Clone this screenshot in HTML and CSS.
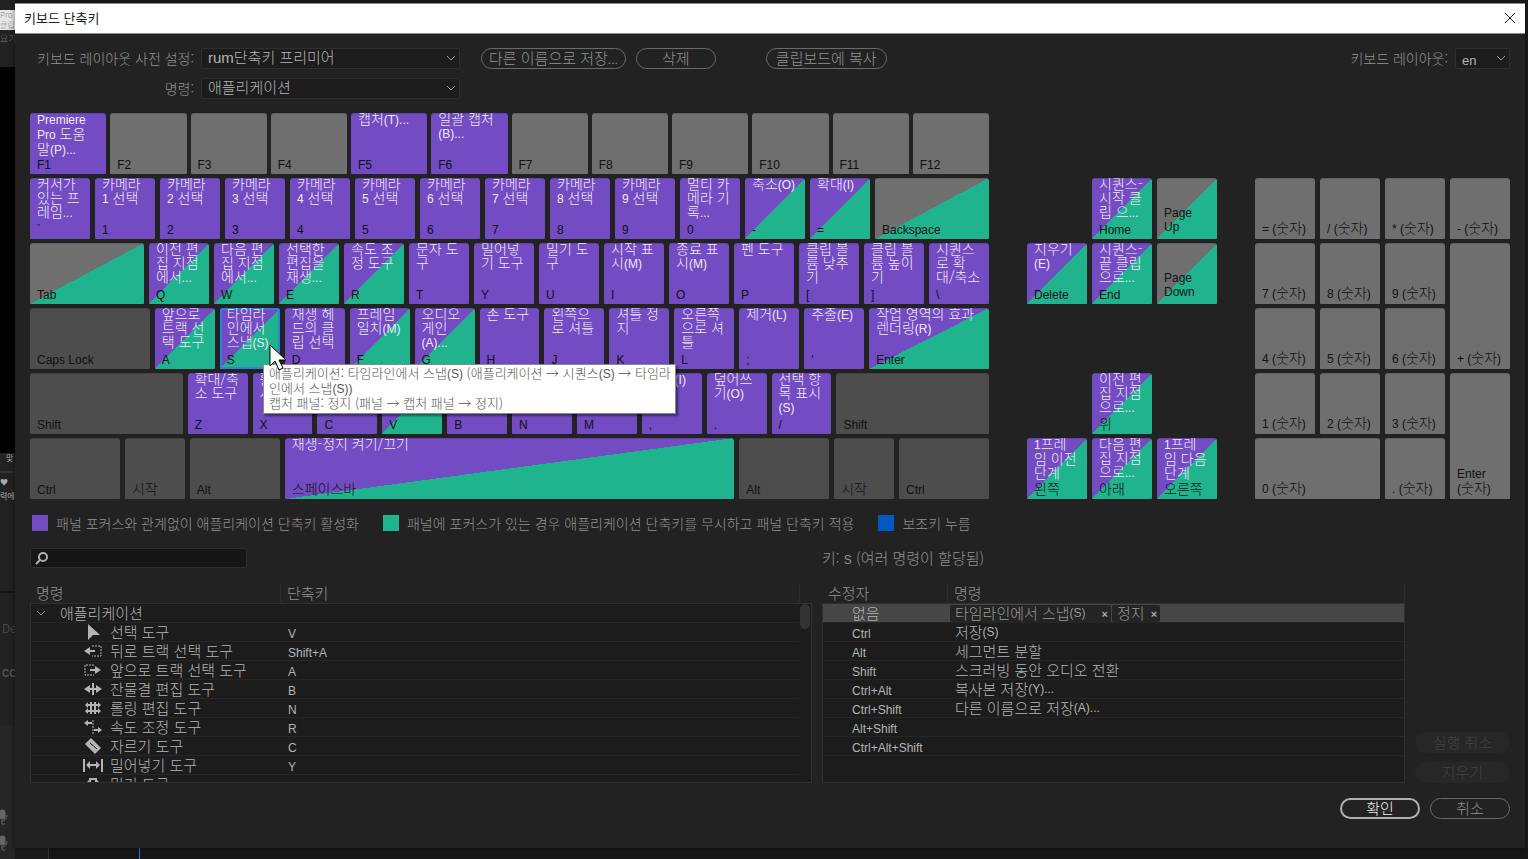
FILE: index.html
```html
<!DOCTYPE html>
<html lang="ko">
<head>
<meta charset="utf-8">
<title>키보드 단축키</title>
<link rel="stylesheet" href="styles.css">
</head>
<body>
<div class="backdrop" aria-hidden="true">
  <div class="strip">
    <div class="menu"><span>Pro 2(</span><span>클립(C)</span></div>
    <div class="tab">요기</div>
    <div class="monitor"></div>
    <div class="tools"><b>맞</b><i></i><b>♥</b><b>력에</b></div>
    <div class="bin">De</div>
    <div class="caption">CC</div>
    <div class="mics">
      <svg viewBox="0 0 10 16"><rect x="0" y="1" width="5" height="9" rx="2"/><path d="M7 6q0 6-6 6M2 12v3h3"/></svg>
      <svg viewBox="0 0 10 16"><rect x="0" y="1" width="5" height="9" rx="2"/><path d="M7 6q0 6-6 6M2 12v3h3"/></svg>
    </div>
  </div>
  <div class="timeline"></div>
</div>

<main class="dialog" role="dialog" aria-labelledby="title">
  <header class="titlebar">
    <h1 id="title">키보드 단축키</h1>
    <button class="close" aria-label="닫기"><svg viewBox="0 0 12 12"><path d="M1 1l10 10M11 1L1 11"/></svg></button>
  </header>
  <div class="content">
    <section class="toolbar">
      <label class="preset-label" for="preset">키보드 레이아웃 사전 설정:</label>
      <div class="select"><select id="preset"><option>rum단축키 프리미어</option></select><svg viewBox="0 0 10 6"><path d="M1 1l4 4 4-4"/></svg></div>
      <div class="actions">
        <button class="pill save">다른 이름으로 저장<small>...</small></button>
        <button class="pill">삭제</button>
        <button class="pill copy">클립보드에 복사</button>
      </div>
      <label class="layout-label" for="layout">키보드 레이아웃:</label>
      <div class="select latin"><select id="layout"><option>en</option></select><svg viewBox="0 0 10 6"><path d="M1 1l4 4 4-4"/></svg></div>
      <label class="preset-label" for="command">명령:</label>
      <div class="select"><select id="command"><option>애플리케이션</option></select><svg viewBox="0 0 10 6"><path d="M1 1l4 4 4-4"/></svg></div>
    </section>

    <section class="keyboard">
      <div class="board">
        <div class="row frow">
          <button class="key app"><span class="cmd"><small>Premiere</small><br><small>Pro</small> 도움<br>말<small>(P)...</small></span><span class="cap">F1</span></button>
          <button class="key"><span class="cap">F2</span></button>
          <button class="key"><span class="cap">F3</span></button>
          <button class="key"><span class="cap">F4</span></button>
          <button class="key app"><span class="cmd">캡처<small>(T)...</small></span><span class="cap">F5</span></button>
          <button class="key app"><span class="cmd">일괄 캡처<br><small>(B)...</small></span><span class="cap">F6</span></button>
          <button class="key"><span class="cap">F7</span></button>
          <button class="key"><span class="cap">F8</span></button>
          <button class="key"><span class="cap">F9</span></button>
          <button class="key"><span class="cap">F10</span></button>
          <button class="key"><span class="cap">F11</span></button>
          <button class="key"><span class="cap">F12</span></button>
        </div>
        <div class="row">
          <button class="key app"><span class="cmd">커서가<br>있는 프<br>레임<small>...</small></span><span class="cap">`</span></button>
          <button class="key app"><span class="cmd">카메라<br><small>1</small> 선택</span><span class="cap">1</span></button>
          <button class="key app"><span class="cmd">카메라<br><small>2</small> 선택</span><span class="cap">2</span></button>
          <button class="key app"><span class="cmd">카메라<br><small>3</small> 선택</span><span class="cap">3</span></button>
          <button class="key app"><span class="cmd">카메라<br><small>4</small> 선택</span><span class="cap">4</span></button>
          <button class="key app"><span class="cmd">카메라<br><small>5</small> 선택</span><span class="cap">5</span></button>
          <button class="key app"><span class="cmd">카메라<br><small>6</small> 선택</span><span class="cap">6</span></button>
          <button class="key app"><span class="cmd">카메라<br><small>7</small> 선택</span><span class="cap">7</span></button>
          <button class="key app"><span class="cmd">카메라<br><small>8</small> 선택</span><span class="cap">8</span></button>
          <button class="key app"><span class="cmd">카메라<br><small>9</small> 선택</span><span class="cap">9</span></button>
          <button class="key app"><span class="cmd">멀티 카<br>메라 기<br>록<small>...</small></span><span class="cap">0</span></button>
          <button class="key app both"><span class="cmd">축소<small>(O)</small></span><span class="cap">-</span></button>
          <button class="key app both"><span class="cmd">확대<small>(I)</small></span><span class="cap">=</span></button>
          <button class="key both w114"><span class="cap">Backspace</span></button>
        </div>
        <div class="row">
          <button class="key both w114"><span class="cap">Tab</span></button>
          <button class="key app both"><span class="cmd">이전 편<br>집 지점<br>에서<small>...</small></span><span class="cap">Q</span></button>
          <button class="key app both"><span class="cmd">다음 편<br>집 지점<br>에서<small>...</small></span><span class="cap">W</span></button>
          <button class="key app both"><span class="cmd">선택한<br>편집을<br>재생<small>...</small></span><span class="cap">E</span></button>
          <button class="key app both"><span class="cmd">속도 조<br>정 도구</span><span class="cap">R</span></button>
          <button class="key app"><span class="cmd">문자 도<br>구</span><span class="cap">T</span></button>
          <button class="key app"><span class="cmd">밀어넣<br>기 도구</span><span class="cap">Y</span></button>
          <button class="key app"><span class="cmd">밀기 도<br>구</span><span class="cap">U</span></button>
          <button class="key app"><span class="cmd">시작 표<br>시<small>(M)</small></span><span class="cap">I</span></button>
          <button class="key app"><span class="cmd">종료 표<br>시<small>(M)</small></span><span class="cap">O</span></button>
          <button class="key app"><span class="cmd">펜 도구</span><span class="cap">P</span></button>
          <button class="key app"><span class="cmd">클립 볼<br>륨 낮추<br>기</span><span class="cap">[</span></button>
          <button class="key app"><span class="cmd">클립 볼<br>륨 높이<br>기</span><span class="cap">]</span></button>
          <button class="key app"><span class="cmd">시퀀스<br>로 확<br>대/축소</span><span class="cap">\</span></button>
        </div>
        <div class="row">
          <button class="key mod w120"><span class="cap">Caps Lock</span></button>
          <button class="key app both"><span class="cmd">앞으로<br>트랙 선<br>택 도구</span><span class="cap">A</span></button>
          <button class="key app both selected"><span class="cmd">타임라<br>인에서<br>스냅<small>(S)</small></span><span class="cap">S</span></button>
          <button class="key app"><span class="cmd">재생 헤<br>드의 클<br>립 선택</span><span class="cap">D</span></button>
          <button class="key app both"><span class="cmd">프레임<br>일치<small>(M)</small></span><span class="cap">F</span></button>
          <button class="key app both"><span class="cmd">오디오<br>게인<br><small>(A)...</small></span><span class="cap">G</span></button>
          <button class="key app"><span class="cmd">손 도구</span><span class="cap">H</span></button>
          <button class="key app"><span class="cmd">왼쪽으<br>로 셔틀</span><span class="cap">J</span></button>
          <button class="key app"><span class="cmd">셔틀 정<br>지</span><span class="cap">K</span></button>
          <button class="key app"><span class="cmd">오른쪽<br>으로 셔<br>틀</span><span class="cap">L</span></button>
          <button class="key app"><span class="cmd">제거<small>(L)</small></span><span class="cap">;</span></button>
          <button class="key app"><span class="cmd">추출<small>(E)</small></span><span class="cap">'</span></button>
          <button class="key app both w120"><span class="cmd">작업 영역의 효과<br>렌더링<small>(R)</small></span><span class="cap">Enter</span></button>
        </div>
        <div class="row">
          <button class="key mod w153"><span class="cap">Shift</span></button>
          <button class="key app"><span class="cmd">확대/축<br>소 도구</span><span class="cap">Z</span></button>
          <button class="key app"><span class="cmd">활<br>시</span><span class="cap">X</span></button>
          <button class="key app"><span class="cap">C</span></button>
          <button class="key app both"><span class="cap">V</span></button>
          <button class="key app"><span class="cap">B</span></button>
          <button class="key app"><span class="cap">N</span></button>
          <button class="key app"><span class="cap">M</span></button>
          <button class="key app"><span class="cmd">삽입<small>(I)</small></span><span class="cap">,</span></button>
          <button class="key app"><span class="cmd">덮어쓰<br>기<small>(O)</small></span><span class="cap">.</span></button>
          <button class="key app"><span class="cmd">선택 항<br>목 표시<br><small>(S)</small></span><span class="cap">/</span></button>
          <button class="key mod w153"><span class="cap">Shift</span></button>
        </div>
        <div class="row">
          <button class="key mod w90"><span class="cap">Ctrl</span></button>
          <button class="key mod"><span class="cap ko">시작</span></button>
          <button class="key mod w90"><span class="cap">Alt</span></button>
          <button class="key app both w450"><span class="cmd">재생-정지 켜기/끄기</span><span class="cap ko">스페이스바</span></button>
          <button class="key mod w90"><span class="cap">Alt</span></button>
          <button class="key mod"><span class="cap ko">시작</span></button>
          <button class="key mod w90"><span class="cap">Ctrl</span></button>
        </div>
        <div class="tooltip" role="tooltip">애플리케이션: 타임라인에서 스냅<small>(S)</small> (애플리케이션 → 시퀀스<small>(S)</small> → 타임라<br>인에서 스냅<small>(S))</small><br>캡처 패널: 정지 (패널 → 캡처 패널 → 정지)</div>
        <svg class="cursor" viewBox="0 0 18 28"><path d="M1 1v21l5-5 4 9 4-2-4-8h7z"/></svg>
      </div>

      <div class="nav">
        <button class="key app both home"><span class="cmd">시퀀스-<br>시작 클<br>립 으<small>...</small></span><span class="cap">Home</span></button>
        <button class="key both pgup"><span class="cap">Page<br>Up</span></button>
        <button class="key app both del"><span class="cmd">지우기<br><small>(E)</small></span><span class="cap">Delete</span></button>
        <button class="key app both end"><span class="cmd">시퀀스-<br>끝 클립<br>으로<small>...</small></span><span class="cap">End</span></button>
        <button class="key both pgdn"><span class="cap">Page<br>Down</span></button>
        <button class="key app both up"><span class="cmd">이전 편<br>집 지점<br>으로<small>...</small></span><span class="cap ko">위</span></button>
        <button class="key app both left"><span class="cmd"><small>1</small>프레<br>임 이전<br>단계</span><span class="cap ko">왼쪽</span></button>
        <button class="key app both down"><span class="cmd">다음 편<br>집 지점<br>으로<small>...</small></span><span class="cap ko">아래</span></button>
        <button class="key app both right"><span class="cmd"><small>1</small>프레<br>임 다음<br>단계</span><span class="cap ko">오른쪽</span></button>
      </div>

      <div class="numpad">
        <span class="spacer"></span>
        <button class="key"><span class="cap ko"><small>= (</small>숫자<small>)</small></span></button>
        <button class="key"><span class="cap ko"><small>/ (</small>숫자<small>)</small></span></button>
        <button class="key"><span class="cap ko"><small>* (</small>숫자<small>)</small></span></button>
        <button class="key"><span class="cap ko"><small>- (</small>숫자<small>)</small></span></button>
        <button class="key"><span class="cap ko"><small>7 (</small>숫자<small>)</small></span></button>
        <button class="key"><span class="cap ko"><small>8 (</small>숫자<small>)</small></span></button>
        <button class="key"><span class="cap ko"><small>9 (</small>숫자<small>)</small></span></button>
        <button class="key tall"><span class="cap ko"><small>+ (</small>숫자<small>)</small></span></button>
        <button class="key"><span class="cap ko"><small>4 (</small>숫자<small>)</small></span></button>
        <button class="key"><span class="cap ko"><small>5 (</small>숫자<small>)</small></span></button>
        <button class="key"><span class="cap ko"><small>6 (</small>숫자<small>)</small></span></button>
        <button class="key"><span class="cap ko"><small>1 (</small>숫자<small>)</small></span></button>
        <button class="key"><span class="cap ko"><small>2 (</small>숫자<small>)</small></span></button>
        <button class="key"><span class="cap ko"><small>3 (</small>숫자<small>)</small></span></button>
        <button class="key tall"><span class="cap ko"><small>Enter</small><br><small>(</small>숫자<small>)</small></span></button>
        <button class="key wide"><span class="cap ko"><small>0 (</small>숫자<small>)</small></span></button>
        <button class="key"><span class="cap ko"><small>. (</small>숫자<small>)</small></span></button>
      </div>
    </section>

    <ul class="legend">
      <li><i class="swatch purple"></i>패널 포커스와 관계없이 애플리케이션 단축키 활성화</li>
      <li><i class="swatch teal"></i>패널에 포커스가 있는 경우 애플리케이션 단축키를 무시하고 패널 단축키 적용</li>
      <li><i class="swatch blue"></i>보조키 누름</li>
    </ul>

    <section class="lists">
      <div class="panel">
        <div class="search">
          <input type="search" aria-label="검색">
          <svg viewBox="0 0 14 14"><circle cx="8" cy="5" r="4"/><path d="M5 8l-4 4"/></svg>
        </div>
        <table class="commands">
          <thead><tr><th>명령</th><th>단축키</th></tr></thead>
          <tbody>
            <tr class="group"><td><svg class="chev" viewBox="0 0 10 6"><path d="M1 1l4 4 4-4"/></svg>애플리케이션</td><td></td></tr>
            <tr><td><svg class="icon" viewBox="0 0 20 16"><path class="f" d="M5 0v16l5-5h7z"/></svg>선택 도구</td><td>V</td></tr>
            <tr><td><svg class="icon" viewBox="0 0 20 16"><path class="f" d="M1 8l6-4v3h5v2H7v3z"/><path class="d" d="M9 3h9v10H9"/></svg>뒤로 트랙 선택 도구</td><td>Shift+A</td></tr>
            <tr><td><svg class="icon" viewBox="0 0 20 16"><path class="f" d="M18 8l-6-4v3H7v2h5v3z"/><path class="d" d="M11 3H2v10h9"/></svg>앞으로 트랙 선택 도구</td><td>A</td></tr>
            <tr><td><svg class="icon" viewBox="0 0 20 16"><path class="f" d="M1 8l6-4v3h2V2h2v5h2V4l6 4-6 4V9h-2v5H9V9H7v3z"/></svg>잔물결 편집 도구</td><td>B</td></tr>
            <tr><td><svg class="icon" viewBox="0 0 20 16"><path d="M8 2v12M12 2v12M4 5h12M4 11h12"/><path class="f" d="M2 5l3-3v6zM2 11l3-3v6zM18 5l-3-3v6zM18 11l-3-3v6z"/></svg>롤링 편집 도구</td><td>N</td></tr>
            <tr><td><svg class="icon" viewBox="0 0 20 16"><path class="f" d="M1 4l4-3v2h4v2H5v2zM19 11l-4-3v2h-4v2h4v2z"/><path class="d" d="M10 1v14"/></svg>속도 조정 도구</td><td>R</td></tr>
            <tr><td><svg class="icon" viewBox="0 0 20 16"><path class="f" d="M2 6l6-6 10 10-6 6z"/><path class="slot" d="M7 5l7 6M8 7l1-1M11 9l1-1"/></svg>자르기 도구</td><td>C</td></tr>
            <tr><td><svg class="icon" viewBox="0 0 20 16"><path d="M1 2v13M19 2v13M4 8h12"/><path class="f" d="M3 8l4-4v8zM17 8l-4-4v8z"/></svg>밀어넣기 도구</td><td>Y</td></tr>
            <tr><td><svg class="icon" viewBox="0 0 20 16"><path d="M7 3h6v10H7z"/><path class="f" d="M2 8l4-4v8zM18 8l-4-4v8z"/></svg>밀기 도구</td><td></td></tr>
          </tbody>
        </table>
        <i class="thumb"></i>
      </div>
      <div class="panel">
        <p class="keyname">키: <small>S</small> (여러 명령이 할당됨)</p>
        <table class="modifiers">
          <thead><tr><th>수정자</th><th>명령</th></tr></thead>
          <tbody>
            <tr class="current"><td class="ko">없음</td><td><span class="tag">타임라인에서 스냅<small>(S)</small><button aria-label="제거">×</button></span><span class="tag near">정지<button aria-label="제거">×</button></span></td></tr>
            <tr><td>Ctrl</td><td>저장<small>(S)</small></td></tr>
            <tr><td>Alt</td><td>세그먼트 분할</td></tr>
            <tr><td>Shift</td><td>스크러빙 동안 오디오 전환</td></tr>
            <tr><td>Ctrl+Alt</td><td>복사본 저장<small>(Y)...</small></td></tr>
            <tr><td>Ctrl+Shift</td><td>다른 이름으로 저장<small>(A)...</small></td></tr>
            <tr><td>Alt+Shift</td><td></td></tr>
            <tr><td>Ctrl+Alt+Shift</td><td></td></tr>
          </tbody>
        </table>
      </div>
      <div class="side">
        <button class="pill" disabled>실행 취소</button>
        <button class="pill" disabled>지우기</button>
      </div>
    </section>

    <footer class="footer">
      <button class="pill primary">확인</button>
      <button class="pill">취소</button>
    </footer>
  </div>
</main>
</body>
</html>
```

FILE: styles.css
```css
* { box-sizing: border-box; }

body {
  position: relative;
  margin: 0;
  padding: 3px 3px 11px 15px;
  min-height: 100vh;
  display: flex;
  overflow: hidden;
  background: #191919;
  color: #929292;
  font: 300 15px/20px "Noto Sans CJK KR", "Liberation Sans", sans-serif;
}

button, select, input { font: inherit; color: inherit; margin: 0; }
button { cursor: pointer; white-space: nowrap; }
small { font: 12px/1 "Liberation Sans", sans-serif; }
svg { fill: none; stroke: currentColor; }

/* application window behind the dialog */
.backdrop { position: absolute; inset: 0; overflow: hidden; background: #1b1b1b; }
.strip {
  width: 15px;
  height: 100%;
  overflow: hidden;
  display: flex;
  flex-direction: column;
  white-space: nowrap;
  background: #222;
  font-size: 9px;
  line-height: 10px;
}
.strip .menu { margin-top: 10px; height: 20px; background: #e8e8e8; color: #888; display: grid; font-size: 8px; }
.strip .tab { height: 37px; padding-top: 4px; color: #777; }
.strip .monitor { height: 386px; background: #000; }
.strip .tools { height: 138px; display: flex; flex-direction: column; gap: 4px; color: #aaa; }
.strip .tools b { font-size: 8px; padding-left: 6px; }
.strip .tools b:nth-of-type(n+2) { padding-left: 0; }
.strip .tools i { height: 6px; border-bottom: 2px solid #333; }
.strip .bin { height: 42px; padding: 30px 0 0 2px; color: #555; font-size: 12px; border-top: 2px solid #141414; }
.strip .caption { height: 20px; margin-top: 35px; padding-left: 2px; font: bold 10px/12px "Liberation Sans", sans-serif; color: #555; }
.strip .mics { margin-top: auto; height: 134px; padding-top: 84px; background: #262626; color: #666; }
.strip .mics svg { display: block; width: 10px; height: 16px; margin-bottom: 10px; }
.strip .mics rect { fill: currentColor; }
.timeline { position: absolute; left: 48px; right: 0; bottom: 0; height: 11px; border-left: 1px solid #333; background: #171717; }
.timeline::after { content: ""; position: absolute; left: 90px; top: 0; bottom: 0; border-left: 1px solid #2d7dd8; }

.dialog {
  position: relative;
  flex: 1;
  min-width: 0;
  background: #222;
  box-shadow: 0 0 6px rgba(0, 0, 0, .5);
}
.titlebar {
  display: flex;
  align-items: center;
  justify-content: space-between;
  height: 31px;
  padding: 0 9px;
  background: #fff;
  border: solid #8a8a8a;
  border-width: 1px 0;
  color: #222;
}
.titlebar h1 { margin: 0; font-size: 13px; font-weight: 400; line-height: 20px; padding-bottom: 2px; }
.close { padding: 0 0 2px; border: 0; background: none; display: flex; }
.close svg { width: 12px; height: 12px; }
.content { padding: 14px 15px 29px; }

/* presets */
.toolbar {
  display: grid;
  grid-template-columns: 165px 259px 1fr auto 55px;
  column-gap: 6px;
  row-gap: 9px;
  align-items: center;
}
.toolbar label { text-align: right; white-space: nowrap; font-size: 14px; line-height: 18px; padding: 0 1px 2px 0; }
.select { position: relative; display: flex; color: #b4b4b4; }
.select select {
  appearance: none;
  width: 100%;
  height: 21px;
  padding: 0 24px 2px 6px;
  background: #1c1c1c;
  border: 1px solid #2e2e2e;
  border-radius: 2px;
  font-family: "Liberation Sans", "Noto Sans CJK KR", sans-serif;
  font-size: 15px;
  line-height: 17px;
}
.latin select { font-size: 13px; font-weight: 400; padding-top: 4px; padding-bottom: 0; line-height: 15px; }
.select svg { position: absolute; right: 4px; top: 7px; width: 10px; height: 6px; pointer-events: none; color: #999; }
.actions { display: flex; gap: 10px; padding-left: 15px; }
.pill {
  min-width: 80px;
  height: 21px;
  padding: 0 9px 2px;
  border: 1px solid #6a6a6a;
  border-radius: 11px;
  background: transparent;
  line-height: 17px;
}
.save { padding: 0 7px 2px; }
.copy { margin-left: 40px; }

/* keyboard */
.keyboard { display: grid; grid-template-columns: 959fr 190fr 255fr; column-gap: 38px; margin-top: 14px; }
.board { position: relative; display: grid; row-gap: 4px; grid-auto-rows: 61px; }
.row { display: flex; gap: 5px; min-width: 0; }
.frow { gap: 4px; }
.key {
  flex: 60 0 0;
  min-width: 0;
  overflow: hidden;
  display: flex;
  flex-direction: column;
  align-items: flex-start;
  padding: 0 0 2px;
  border: 0;
  border-radius: 3px 3px 1px 1px;
  text-align: left;
  color: #111;
  background: var(--face);
  box-shadow: inset 0 1px rgba(0, 0, 0, .12);
  --face: #6f6f6f;
  font-size: 14px;
  line-height: 14px;
}
.app { --face: #734bc2; }
.mod { --face: #4d4d4d; }
.both { background: linear-gradient(to bottom right, var(--face) 50%, #1fb48d 50%); }
.selected { box-shadow: inset 0 0 0 2px #2d80e4; }
.w90 { flex-grow: 90; }
.w114 { flex-grow: 114; }
.w120 { flex-grow: 120; }
.w153 { flex-grow: 153; }
.w450 { flex-grow: 450; }
.cmd { display: block; margin-top: -2px; padding-left: 7px; color: #f0eaff; }
.cap { display: block; margin-top: auto; padding-left: 7px; font: 400 12px/14px "Liberation Sans", sans-serif; }
.cap.ko { font: 300 14px/14px "Noto Sans CJK KR", sans-serif; padding-bottom: 2px; }

.nav, .numpad { display: grid; grid-auto-rows: 61px; gap: 4px 5px; }
.nav { grid-template-columns: repeat(3, 1fr); }
.home { grid-area: 2 / 2; }
.pgup { grid-area: 2 / 3; }
.pgup .cap, .pgdn .cap { padding-bottom: 3px; }
.del { grid-area: 3 / 1; }
.end { grid-area: 3 / 2; }
.pgdn { grid-area: 3 / 3; }
.up { grid-area: 5 / 2; }
.left { grid-area: 6 / 1; }
.down { grid-area: 6 / 2; }
.right { grid-area: 6 / 3; }
.numpad { grid-template-columns: repeat(4, 1fr); }
.spacer { grid-column: span 4; }
.tall { grid-row: span 2; }
.wide { grid-column: span 2; }

.tooltip {
  position: absolute;
  left: 233px;
  top: 251px;
  padding: 0 4px 3px 5px;
  background: #fff;
  border: 1px solid #888;
  box-shadow: 2px 2px 2px rgba(0, 0, 0, .45);
  color: #555;
  font-size: 13px;
  line-height: 15px;
  white-space: nowrap;
}
.cursor { position: absolute; left: 239px; top: 231px; width: 18px; height: 28px; fill: #fff; stroke: #000; }

/* legend */
.legend { display: flex; flex-wrap: wrap; gap: 24px; list-style: none; margin: 12px 0 0; padding: 0 2px; }
.legend li { display: flex; align-items: center; gap: 8px; line-height: 24px; font-size: 14px; white-space: nowrap; }
.swatch { width: 16px; height: 16px; }
.purple { background: #734bc2; }
.teal { background: #1fb48d; }
.blue { background: #0059c0; }

/* lists */
.lists { display: grid; grid-template-columns: 782fr 583fr 95px; column-gap: 10px; margin-top: 13px; }
.panel { position: relative; min-width: 0; }
.search { position: relative; width: 217px; height: 20px; margin-bottom: 15px; }
.search input { width: 100%; height: 20px; padding: 0 6px 0 22px; background: #161616; border: 1px solid #2e2e2e; border-radius: 2px; }
.search svg { position: absolute; left: 5px; top: 4px; width: 14px; height: 14px; color: #b0b0b0; stroke-width: 2; }
.keyname { margin: 0 0 15px; line-height: 20px; }

table, thead { display: block; }
tr { display: grid; }
.commands tr { grid-template-columns: 251px 1fr; margin-right: 12px; }
.modifiers tr { grid-template-columns: 126px 1fr; }
th { padding: 0 6px; font-weight: 300; line-height: 20px; text-align: left; border-right: 1px solid #2c2c2c; }
tbody { display: block; height: 180px; overflow: hidden; background: #1c1c1c; border: 1px solid #303030; color: #b4b4b4; }
tbody tr { height: 19px; border-bottom: 1px solid #262626; }
td { padding: 0 6px; display: flex; align-items: center; height: 18px; white-space: nowrap; line-height: 18px; }
.commands td:last-child, .modifiers td:first-child { font: 400 12px/18px "Liberation Sans", sans-serif; padding-top: 4px; }
.commands td:first-child { padding-left: 52px; gap: 7px; }
.commands .group td:first-child { padding-left: 5px; gap: 14px; }
.modifiers td:first-child { padding-left: 29px; }
.modifiers td.ko { font: 300 15px/18px "Noto Sans CJK KR", sans-serif; padding-top: 0; }
.chev { width: 10px; height: 6px; color: #888; }
.icon { width: 20px; height: 16px; stroke-width: 2; }
.icon .f { fill: currentColor; stroke: none; }
.icon .d { stroke-width: 1; stroke-dasharray: 2 1; }
.icon .slot { stroke: #1c1c1c; stroke-width: 1; }
.thumb { position: absolute; right: 2px; top: 56px; width: 10px; height: 25px; border-radius: 5px; background: #333; }
.current { background: #464646; }
.current td:last-child { padding-left: 1px; gap: 1px; }
.tag { display: flex; align-items: center; height: 17px; padding: 0 3px 0 5px; background: #242424; border-radius: 2px; color: #999; }
.tag button { margin-left: 16px; padding: 2px 0 0; border: 0; background: none; font: bold 11px/14px "Liberation Sans", sans-serif; color: #aaa; }
.tag.near button { margin-left: 6px; }

.side { display: flex; flex-direction: column; justify-content: flex-end; gap: 9px; }
.pill:disabled { color: #444; background: #272727; border-color: #272727; }
.footer { display: flex; justify-content: flex-end; gap: 10px; margin-top: 15px; }
.primary { border: 2px solid #b0b0b0; color: #eee; line-height: 15px; }
```
